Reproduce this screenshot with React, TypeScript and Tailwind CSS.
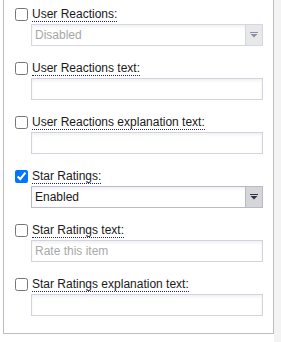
import React from "react";

type Field = {
  label: string;
  checked: boolean;
  kind: "select" | "text";
  value?: string;
  placeholder?: string;
  disabled?: boolean;
};

const fields: Field[] = [
  { label: "User Reactions:", checked: false, kind: "select", value: "Disabled", disabled: true },
  { label: "User Reactions text:", checked: false, kind: "text" },
  { label: "User Reactions explanation text:", checked: false, kind: "text" },
  { label: "Star Ratings:", checked: true, kind: "select", value: "Enabled" },
  { label: "Star Ratings text:", checked: false, kind: "text", placeholder: "Rate this item" },
  { label: "Star Ratings explanation text:", checked: false, kind: "text" },
];

function Arrow({ color }: { color: string }) {
  return (
    <svg width="8" height="6" viewBox="0 0 8 6">
      <rect x="0" y="0" width="8" height="1" fill={color} />
      <path d="M0.5 2 L7.5 2 L4 5.5 Z" fill={color} />
    </svg>
  );
}

function SelectBox({ value, disabled }: { value?: string; disabled?: boolean }) {
  return (
    <div
      className={
        "flex h-[22px] w-[232px] border bg-white shadow-[inset_0_2px_3px_rgba(0,0,0,0.06)] " +
        (disabled ? "border-[#d6d6e0]" : "border-[#b9b9cb]")
      }
    >
      <div
        className={
          "flex-1 pl-[3px] leading-[20px] " + (disabled ? "text-[#a6a6a6]" : "text-[#1a1a1a]")
        }
      >
        {value}
      </div>
      <div
        className={
          "flex w-[17px] items-center justify-center border-l " +
          (disabled ? "border-[#d6d6e0] bg-[#e8e8ea]" : "border-[#b9b9cb] bg-[#d6d6d8]")
        }
      >
        <Arrow color={disabled ? "#8b90a6" : "#2d3448"} />
      </div>
    </div>
  );
}

function TextBox({ placeholder }: { placeholder?: string }) {
  return (
    <div className="h-[22px] w-[232px] border border-[#d3d3df] bg-white pl-[3px] leading-[20px] text-[#a9a9a9] shadow-[inset_0_2px_3px_rgba(0,0,0,0.06)]">
      {placeholder}
    </div>
  );
}

export default function App() {
  return (
    <div
      className="flex h-[342px] w-[281px] overflow-hidden bg-white text-[12px]"
      style={{ fontFamily: "'Liberation Sans', Arial, sans-serif" }}
    >
      <div className="ml-[3px] h-[334px] w-[271px] shrink-0 border-x border-b border-[#bcbcc4] bg-white pl-[11px] pt-[7px]">
        <div className="flex flex-col gap-[15px]">
          {fields.map((f) => (
            <div key={f.label} className="flex flex-col">
              <div className="flex h-[15px] items-center">
                <input
                  type="checkbox"
                  defaultChecked={f.checked}
                  className="m-0 h-[13px] w-[13px]"
                />
                <span className="ml-[4px] h-[15px] border-b border-dotted border-[#20208a] leading-[14px] text-[#1a1a1a]">
                  {f.label}
                </span>
              </div>
              <div className="ml-[16px] mt-[2px]">
                {f.kind === "select" ? (
                  <SelectBox value={f.value} disabled={f.disabled} />
                ) : (
                  <TextBox placeholder={f.placeholder} />
                )}
              </div>
            </div>
          ))}
        </div>
      </div>
      <div className="flex-1 bg-[#f3f3f4]" />
    </div>
  );
}
